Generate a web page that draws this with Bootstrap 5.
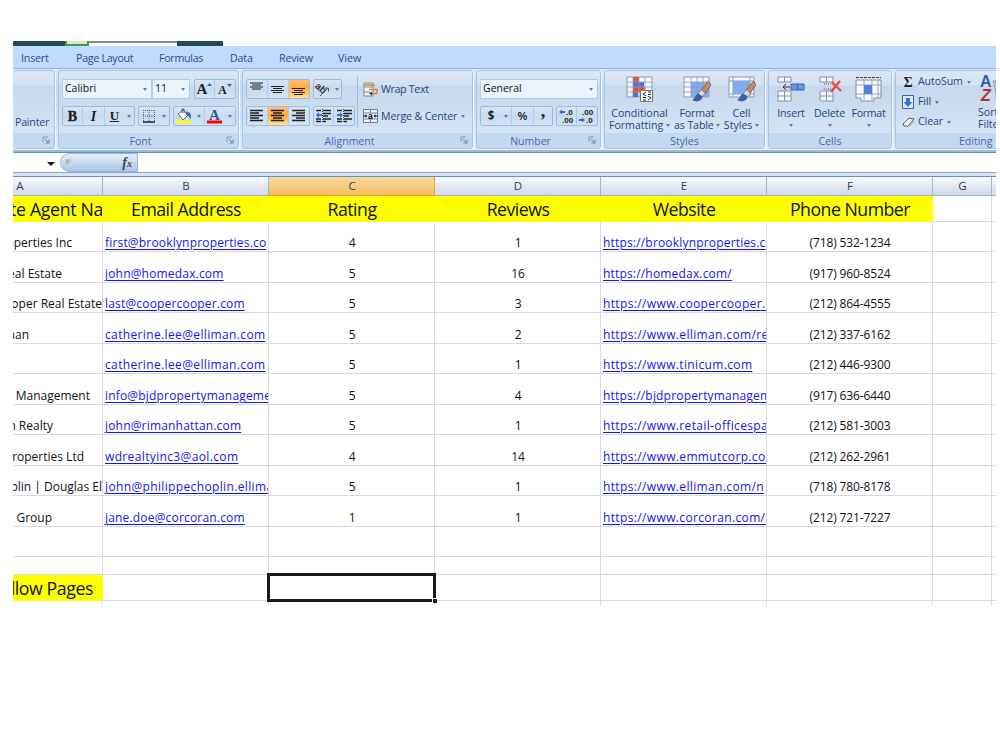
<!DOCTYPE html>
<html lang="en">
<head>
<meta charset="utf-8">
<meta name="viewport" content="width=device-width, initial-scale=1">
<title>Agents workbook</title>
<link href="https://cdn.jsdelivr.net/npm/bootstrap@5.3.0/dist/css/bootstrap.min.css" rel="stylesheet">
<style>
body{font-family:"Open Sans","Noto Sans",sans-serif;background:#fff;color:#111;overflow:hidden}
.book{width:983px;margin:41px 0 0 13px;overflow:hidden}
.titlestrip{height:5px;width:210px;background:#26494e}
.titlestrip .t1{width:24px;margin-left:52px;background:linear-gradient(#eedada 60%,#32a342 60%);border:solid #32a342;border-width:0 2px}
.titlestrip .t2{width:88px;background:#fff;border-top:2px solid #889}
.tabs{height:22px;background:#bfdbff;font-size:10.7px;line-height:24px;color:#15428b}
.tabs a{color:#24508f;text-decoration:none;white-space:nowrap}
.ribbon{height:82px;background:linear-gradient(#dbe8f8,#c8daf0 20%,#cfe0f3 60%,#d8f0fb);border-top:1px solid #8db2e3;padding-top:1px;width:1010px}
.grp{height:79px;border:1px solid #a9c4e2;border-radius:3px;background:linear-gradient(#dce7f5,#d3e1f1 18%,#c7d8ed 20%,#d9e8f7);box-shadow:1px 1px 0 #eef7ff;margin-right:3px;flex:none;overflow:hidden}
.glabel{height:15px;background:#c2d9f1;font-size:10.5px;line-height:16px;color:#3e6aaa;text-align:center;position:relative;flex:none}
.glabel svg{position:absolute;right:4px;top:3px}
.gbody{color:#24467f;font-size:10.6px;padding-top:8px;height:62px}
.r1{height:21px;margin-bottom:6px}
.r2{height:21px}
.seg{height:20px;border:1px solid #9dbbe1;border-radius:2px;background:linear-gradient(#d7e5f6,#c9dbf0 50%,#d3e3f5);margin-right:3px;color:#222}
.seg>span{display:flex;align-items:center;justify-content:center;border-right:1px solid #b5cbe7;height:18px}
.seg>span:last-child{border:0}
.seg>.on{background:linear-gradient(#fdc07a,#ffa844 45%,#ffe28b)}
.combo{height:20px;border:1px solid #b3cbe8;background:#eaf2fb;color:#111;padding:0 4px 0 2px;font-size:10.5px}
.dd{width:0;height:0;border:2.5px solid transparent;border-top:3px solid #5a7fb5;border-bottom:0;display:inline-block;flex:none}
.ser{font-family:"Liberation Serif",serif;font-weight:bold;color:#222}
.big{text-align:center;line-height:12px;white-space:nowrap;margin-top:-4px;font-size:10.6px}
.big svg{display:block;margin:1px auto 4px}
.big .dd{vertical-align:2px}
.vsep{width:1px;height:52px;background:#9dbbe1;margin-top:-3px}
.underline-bar{height:3px;background:#9dbad9;border-bottom:1px solid #6390c0}
.fbar{height:19px;background:#fff}
.fx{width:78px;margin-left:47px;border-radius:10px 0 0 10px;background:linear-gradient(#e8f0fa,#c4d6ef 60%,#a9c4e8);border:1px solid #9bb6d8}
.knob{width:7px;height:7px;border-radius:50%;background:radial-gradient(circle at 30% 30%,#a5afba,#e6ebf0)}
.fsep{height:5px;background:#d8e5f5;border-top:1px solid #8fa8c8;border-bottom:1px solid #6390c0}
.sheet{table-layout:fixed;width:1060px;border-collapse:separate;border-spacing:0}
.sheet th,.sheet td{padding:0;border-right:1px solid #d3dbea;border-bottom:1px solid #d3dbea;overflow:hidden;white-space:nowrap}
.sheet .heads th{height:19px;line-height:18px;font-weight:400;font-size:11.5px;text-align:center;color:#333f50;background:linear-gradient(#f7fafd,#dfe6f0 60%,#d3dae8);border-color:#9eb6ce;padding-left:1px}
.sheet .heads th.sel{background:linear-gradient(#f9d99f,#f1bf63);border-color:#f29536}
.sheet .titles td{height:26px;line-height:24px;font-size:17.7px;letter-spacing:-.5px;text-align:center;padding-left:1px}
.sheet td.y{background:#ff0;border-color:#ff0}
.sheet .titles td>div,.sheet .rec td>div{display:flex}
.rec td{font-size:12px;height:30px}
.rec:nth-child(even) td{height:31px}
.rec td>div{height:29px;line-height:17px;padding-top:12px;padding-left:1px;letter-spacing:-.12px;justify-content:center}
.rec:nth-child(even) td>div{height:30px;padding-top:13px}
.rec td>.nm{justify-content:flex-end;letter-spacing:0}
.rec td>.lk{justify-content:flex-start;padding-left:2px}
.lk a{color:#1414f0;text-decoration:underline;text-underline-offset:2px;text-decoration-thickness:1px;letter-spacing:.18px}
.lk a.wide{letter-spacing:.36px}
.active-cell{position:absolute;left:-2px;top:-2px;width:169px;height:29px;border:3px solid #1a1a1a}
.active-cell:after{content:"";position:absolute;right:-4px;bottom:-4px;width:5px;height:5px;background:#1a1a1a;border:solid #fff;border-width:1px 0 0 1px}
</style>
</head>
<body>
<svg width="0" height="0" class="position-absolute"><defs>
<symbol id="launch" viewBox="0 0 8 8"><path d="M1 6V1H6" fill="none" stroke="#7896bd"/><path d="M3 3l3 3M7 3.500V7H3.500" fill="none" stroke="#5d7fae"/></symbol>
<symbol id="brush" viewBox="0 0 20 22"><path d="M17.500 0 9 10l4 4L20 4z" fill="#c48d58" stroke="#6f5240" stroke-width=".8"/><path d="m10 9-4 5 4 3 4-4z" fill="#d8dde5" stroke="#666" stroke-width=".7"/><path d="M6.500 13c-4 2-3 5-6.500 7 5 3 11 1 11-4z" fill="#3763ad"/></symbol>
</defs></svg>
<main class="book">
<div class="titlestrip d-flex"><div class="t1"></div><div class="t2"></div></div>
<nav class="tabs d-flex">
<a href="#" style="margin-left:8px;width:55px;letter-spacing:-.2px">Insert</a><a href="#" style="width:83px;letter-spacing:-.3px">Page Layout</a><a href="#" style="width:71px;letter-spacing:-.3px">Formulas</a><a href="#" style="width:49px;letter-spacing:-.2px">Data</a><a href="#" style="width:59px;letter-spacing:-.2px">Review</a><a href="#">View</a>
</nav>
<div class="ribbon d-flex">
 <section class="grp d-flex flex-column" style="width:42px;border-left:0"><div class="gbody" style="padding:44px 0 0 2px;letter-spacing:-.2px">Painter</div><div class="glabel"><svg width="8" height="8"><use href="#launch"/></svg></div></section>

 <section class="grp d-flex flex-column" style="width:181px"><div class="gbody" style="padding-left:3px">
  <div class="r1 d-flex"><div class="combo d-flex align-items-center justify-content-between" style="width:90px">Calibri<i class="dd"></i></div><div class="combo d-flex align-items-center justify-content-between me-1" style="width:38px">11<i class="dd"></i></div>
   <div class="seg d-flex me-0" style="width:42px"><span class="ser" style="width:20px;font-size:15px">A<svg width="5" height="12"><path d="M0 3 2.500 0 5 3z" fill="#3b65a5"/></svg></span><span class="ser" style="width:20px;font-size:11.5px;padding-top:3px">A<svg width="5" height="14"><path d="M0 0 2.500 3 5 0z" fill="#3b65a5"/></svg></span></div></div>
  <div class="r2 d-flex"><div class="seg d-flex" style="width:73px"><span class="ser" style="width:20px;font-size:14px;-webkit-text-stroke:.4px #222">B</span><span class="ser fst-italic" style="width:22px;font-size:14px">I</span><span class="ser" style="width:19px;font-size:13px;border:0"><u>U</u></span><span style="width:10px"><i class="dd"></i></span></div>
   <div class="seg d-flex" style="width:32px"><span style="width:20px;border:0"><svg width="12" height="13"><path d="M.5 0V12M6 0V12M11.500 0V12M0 .5H12M0 6H12" stroke="#667" stroke-dasharray="1 1"/><path d="M0 12H12" stroke="#222" stroke-width="1.500"/></svg></span><span style="width:10px"><i class="dd"></i></span></div>
   <div class="seg d-flex me-0" style="width:63px"><span style="width:20px;border:0"><svg width="16" height="16"><path d="m2 6 5-4 5 5-5 5z" fill="#fff" stroke="#526787"/><path d="M6 5V1h2v4" fill="none" stroke="#555"/><path d="M10 3.500c5 0 6 4 4.500 8-1-2-2-4-4.500-5z" fill="#3f6fc0"/><path d="M0 12.500h15v3H0z" fill="#ff0"/></svg></span><span style="width:11px"><i class="dd"></i></span><span style="width:19px;border:0"><svg width="15" height="16"><text x="2" y="11.500" font-family="Liberation Serif" font-weight="bold" font-size="15" fill="#31599b">A</text><path d="M0 12.500h15v3H0z" fill="#f00"/></svg></span><span style="width:11px"><i class="dd"></i></span></div></div>
 </div><div class="glabel" style="padding-right:16px">Font<svg width="8" height="8"><use href="#launch"/></svg></div></section>

 <section class="grp d-flex flex-column" style="width:231px"><div class="gbody d-flex" style="padding-left:3px">
  <div style="width:111px"><div class="r1 d-flex"><div class="seg d-flex" style="width:64px"><span style="width:21px"><svg width="14" height="14"><path d="M0 1h13M2 3h9M0 5h13M2 7h9" stroke="#222" stroke-width="1.200"/></svg></span><span style="width:21px"><svg width="14" height="14"><path d="M0 4.500h13M2 6.500h9M0 8.500h13M2 10.500h9" stroke="#222" stroke-width="1.200"/></svg></span><span class="on" style="width:20px"><svg width="14" height="14"><path d="M0 6.500h13M2 8.500h9M0 10.500h13M2 12.500h9" stroke="#222" stroke-width="1.200"/></svg></span></div>
   <div class="seg d-flex" style="width:29px"><span style="width:18px;border:0"><svg width="16" height="16"><text x="-1" y="11" transform="rotate(40 6 9)" font-family="Liberation Sans" font-size="10" font-weight="bold" fill="#333">ab</text><path d="m5 15 8-8m-3 0h3.500v3.500" stroke="#555" fill="none"/></svg></span><span style="width:9px"><i class="dd"></i></span></div></div>
   <div class="r2 d-flex"><div class="seg d-flex" style="width:64px"><span style="width:21px"><svg width="14" height="14"><path d="M0 1.500h13M0 4h9M0 6.500h13M0 9h9M0 11.500h13" stroke="#222" stroke-width="1.300"/></svg></span><span class="on" style="width:21px"><svg width="14" height="14"><path d="M0 1.500h13M2 4h9M0 6.500h13M2 9h9M0 11.500h13" stroke="#222" stroke-width="1.300"/></svg></span><span style="width:20px"><svg width="14" height="14"><path d="M0 1.500h13M4 4h9M0 6.500h13M4 9h9M0 11.500h13" stroke="#222" stroke-width="1.300"/></svg></span></div>
   <div class="seg d-flex" style="width:42px"><span style="width:20px"><svg width="15" height="14"><path d="M0 1.500h5M7 1.500h8M7 4.500h8M7 7h5M0 10h5M7 10h8M0 12.500h5M7 12.500h3" stroke="#222" stroke-width="1.500"/><path d="M6.500 0v14" stroke="#444" stroke-dasharray="1 1"/><path d="M0 6l3-3v2h3v2H3v2z" fill="#396fc5"/></svg></span><span style="width:20px"><svg width="15" height="14"><path d="M0 1.500h5M7 1.500h8M7 4.500h8M7 7h5M0 10h5M7 10h8M0 12.500h5M7 12.500h3" stroke="#222" stroke-width="1.500"/><path d="M6.500 0v14" stroke="#444" stroke-dasharray="1 1"/><path d="M6 6 3 3v2H0v2h3v2z" fill="#396fc5"/></svg></span></div></div></div>
  <div class="vsep"></div>
  <div style="padding-left:5px"><div class="r1 d-flex align-items-center gap-1 text-nowrap"><svg width="15" height="16"><path d="M1 1h9v13H1z" fill="#f4f7fb" stroke="#7c8797"/><path d="M1 5h9M1 10h6" stroke="#7c8797"/><path d="M1 3h11M6 7.500h8v4H8" stroke="#c98238" stroke-width="1.300" fill="none"/><path d="m9 9.500-3 2 3 2z" fill="#333"/></svg><span style="margin-left:-1px;letter-spacing:-.3px">Wrap Text</span></div>
   <div class="r2 d-flex align-items-center gap-1 text-nowrap"><svg width="15" height="15"><path d="M.5.5h14v13H.5zM.5 4h14M.5 10h14M7.500.5V4M7.500 10v3.500" fill="#eef3fa" stroke="#6e7f99"/><path d="M0 7h4M11 7h4" stroke="#222"/><path d="M2.500 5l2 2-2 2zM12.500 5l-2 2 2 2z" fill="#222"/><text x="5" y="9.500" font-size="8.500" font-weight="bold" font-family="Liberation Sans">a</text></svg><span style="margin-left:-1px;letter-spacing:-.12px">Merge &amp; Center</span><i class="dd"></i></div></div>
 </div><div class="glabel" style="padding-right:16px">Alignment<svg width="8" height="8"><use href="#launch"/></svg></div></section>

 <section class="grp d-flex flex-column" style="width:125px"><div class="gbody" style="padding-left:3px">
  <div class="r1"><div class="combo d-flex align-items-center justify-content-between" style="width:118px">General<i class="dd"></i></div></div>
  <div class="r2 d-flex"><div class="seg d-flex" style="width:73px"><span class="fw-bold" style="width:20px;font-size:11.5px;border:0">$</span><span style="width:11px"><i class="dd"></i></span><span style="width:22px;font-size:11.5px;font-weight:600">%</span><span class="ser" style="width:18px;font-size:18px;padding-bottom:9px">,</span></div>
  <div class="seg d-flex me-0" style="width:42px"><span style="width:20px"><svg width="16" height="16" font-family="Liberation Sans" font-size="8" font-weight="bold" fill="#222"><text x="7" y="7">.0</text><text x="3" y="15">.00</text><path d="M0 4l3-2.500V3h3v2H3v1.500z" fill="#346cc4"/></svg></span><span style="width:20px"><svg width="16" height="16" font-family="Liberation Sans" font-size="8" font-weight="bold" fill="#222"><text x="3" y="7">.00</text><text x="7" y="15">.0</text><path d="m6 12-3-2.500V11H0v2h3v1.500z" fill="#346cc4"/></svg></span></div></div>
 </div><div class="glabel" style="padding-right:16px">Number<svg width="8" height="8"><use href="#launch"/></svg></div></section>

 <section class="grp d-flex flex-column" style="width:161px"><div class="gbody d-flex">
  <div class="big" style="width:69px"><svg width="28" height="27"><path d="M1 1h25v20H1z" fill="#f5f8fd" stroke="#8b9bb5"/><path d="M7 1h6v5H7zM7 11h12v5H7z" fill="#ef4d36"/><path d="M7 6h11v5H7zM7 16h5v5H7z" fill="#4574d6"/><path d="M7 1v20M13 1v20M19 1v20M1 6h25M1 11h25M1 16h25" stroke="#8b9bb5" stroke-width=".8"/><path d="M14.500 14.500h12v11h-12z" fill="#fff" stroke="#777"/><path d="m20 16-3 2 3 2M17 21.500h3M17 24h3M22 16h3M22 18.500h3M22 20l3 2-3 2" fill="none" stroke="#222"/></svg>Conditional<br>Formatting <i class="dd"></i></div>
  <div class="big" style="width:46px;letter-spacing:-.1px"><svg width="28" height="27"><path d="M1 1h25v20H1z" fill="#f5f8fd" stroke="#8b9bb5"/><path d="M8 6h18v15H8z" fill="#82abef"/><path d="M8 1v20M14 1v20M20 1v20M1 6h25M1 11h25M1 16h25" stroke="#8b9bb5" stroke-width=".8"/><use href="#brush" x="9" y="5" width="19" height="21"/></svg>Format<br>as Table <i class="dd"></i></div>
  <div class="big" style="width:43px"><svg width="28" height="27"><path d="M1 1h25v20H1z" fill="#f5f8fd" stroke="#8b9bb5"/><path d="M5 1v20M22 1v20M1 5h25M1 18h25" stroke="#8b9bb5"/><path d="M5 5h17v13H5z" fill="#82abef"/><use href="#brush" x="9" y="5" width="19" height="21"/></svg>Cell<br>Styles <i class="dd"></i></div>
 </div><div class="glabel">Styles</div></section>

 <section class="grp d-flex flex-column" style="width:124px"><div class="gbody d-flex" style="padding-left:3px">
  <div class="big" style="width:38px;letter-spacing:-.2px"><svg width="28" height="27"><path d="M1 1h13v5H1zM7.500 1v5M1 15h13v10H1zM1 20h13M7.500 15v10" fill="#f7f9fc" stroke="#8490a5"/><path d="M14 8h13v6H14zM20.500 8v6" fill="#6a96e4" stroke="#3d62a6"/><path d="M6 11h7M9 8l-3 3 3 3" fill="none" stroke="#334"/></svg>Insert<br><i class="dd"></i></div>
  <div class="big" style="width:39px;letter-spacing:-.2px"><svg width="28" height="27"><path d="M4 1h13v5H4zM10.500 1v5M4 15h13v10H4zM4 20h13M10.500 15v10" fill="#f7f9fc" stroke="#8490a5"/><path d="M8 8h10v5H8" fill="none" stroke="#557" stroke-dasharray="1 1"/><path d="m16 6 9 9M24 5l-9 11" stroke="#ec4c36" stroke-width="2.300"/></svg>Delete<br><i class="dd"></i></div>
  <div class="big" style="width:39px;letter-spacing:-.3px"><svg width="28" height="27"><path d="M1 1.500h25" stroke="#444" stroke-dasharray="3 1"/><path d="M1 4h25v18h-7v3H6v-3H1z" fill="#f7f9fc" stroke="#8490a5"/><path d="M9 4v20M17 4v20M1 9h25M1 18h25M23 4v18" stroke="#8490a5" stroke-width=".8"/><path d="M9 9h8v9H9z" fill="#4d82dc"/></svg>Format<br><i class="dd"></i></div>
 </div><div class="glabel">Cells</div></section>

 <section class="grp d-flex flex-column" style="width:160px"><div class="gbody d-flex" style="padding:1px 0 0 6px">
  <div style="width:73px;letter-spacing:-.1px"><div class="d-flex align-items-center" style="height:20px;gap:4px"><span class="ser text-center" style="width:12px;font-size:14px">Σ</span>AutoSum<i class="dd"></i></div>
  <div class="d-flex align-items-center" style="height:20px;gap:4px"><svg width="12" height="14"><path d="M.5.5h11v13H.5z" fill="#dceaff" stroke="#3f65a4"/><path d="M4 3h4v4h2.500L6 12 1.500 7H4z" fill="#3972d7"/></svg>Fill<i class="dd"></i></div>
  <div class="d-flex align-items-center" style="height:20px;gap:4px"><svg width="12" height="12"><path d="m1 8 6-6 5 1-6 7H2z" fill="#fff" stroke="#555"/><path d="m6 10 6-6v2l-5 5z" fill="#a7b3c4"/></svg>Clear<i class="dd"></i></div></div>
  <div style="padding:3px 0 0 5px;line-height:12px"><svg width="30" height="27" class="d-block" style="margin-bottom:4px" font-family="Liberation Sans" font-weight="bold" font-size="16"><path d="M13 6h15L20 16v8l-4-2v-6z" fill="#ccc" stroke="#888"/><text x="0" y="12" fill="#3660a6">A</text><text x="1" y="26" fill="#a83834" font-style="italic">Z</text></svg><div style="margin-left:-2px">Sort &amp;<br>Filter</div></div>
 </div><div class="glabel text-start" style="padding-left:63px">Editing</div></section>
</div>
<div class="underline-bar"></div>
<div class="fbar d-flex"><div class="fx d-flex align-items-center justify-content-between position-relative" style="padding:0 5px 0 4px"><i class="dd position-absolute" style="left:-14px;top:8px;border-width:4px 4px 0;border-top-color:#111"></i><span class="knob"></span><span class="ser fst-italic" style="font-size:14px;color:#444">f<small style="font-size:10px">x</small></span></div></div>
<div class="fsep"></div>
<table class="sheet">
<colgroup><col style="width:90px"><col style="width:166px"><col style="width:166px"><col style="width:166px"><col style="width:166px"><col style="width:166px"><col style="width:59px"><col></colgroup>
<tbody>
<tr class="heads"><th><div style="margin-left:-76px">A</div></th><th>B</th><th class="sel">C</th><th>D</th><th>E</th><th>F</th><th>G</th><th></th></tr>
<tr class="titles"><td class="y"><div style="margin-left:-4px;letter-spacing:-.3px">te Agent Na</div></td><td class="y">Email Address</td><td class="y">Rating</td><td class="y">Reviews</td><td class="y">Website</td><td class="y">Phone Number</td><td></td><td></td></tr>
<tr class="rec"><td><div class="nm" style="padding-right:30px">operties Inc</div></td><td><div class="lk"><a href="#">first@brooklynproperties.co</a></div></td><td><div>4</div></td><td><div>1</div></td><td><div class="lk"><a href="#">https://brooklynproperties.c</a></div></td><td><div>(718) 532-1234</div></td><td></td><td></td></tr>
<tr class="rec"><td><div class="nm" style="padding-right:40px">eal Estate</div></td><td><div class="lk"><a href="#">john@homedax.com</a></div></td><td><div>5</div></td><td><div>16</div></td><td><div class="lk"><a href="#">https://homedax.com/</a></div></td><td><div>(917) 960-8524</div></td><td></td><td></td></tr>
<tr class="rec"><td><div class="nm">ooper Real Estate</div></td><td><div class="lk"><a href="#">last@coopercooper.com</a></div></td><td><div>5</div></td><td><div>3</div></td><td><div class="lk"><a class="wide" href="#">https://www.coopercooper.c</a></div></td><td><div>(212) 864-4555</div></td><td></td><td></td></tr>
<tr class="rec"><td><div class="nm" style="padding-right:73px">man</div></td><td><div class="lk"><a class="wide" href="#">catherine.lee@elliman.com</a></div></td><td><div>5</div></td><td><div>2</div></td><td><div class="lk"><a class="wide" href="#">https://www.elliman.com/re</a></div></td><td><div>(212) 337-6162</div></td><td></td><td></td></tr>
<tr class="rec"><td></td><td><div class="lk"><a class="wide" href="#">catherine.lee@elliman.com</a></div></td><td><div>5</div></td><td><div>1</div></td><td><div class="lk"><a class="wide" href="#">https://www.tinicum.com</a></div></td><td><div>(212) 446-9300</div></td><td></td><td></td></tr>
<tr class="rec"><td><div class="nm" style="padding-right:12px">Management</div></td><td><div class="lk"><a href="#">info@bjdpropertymanageme</a></div></td><td><div>5</div></td><td><div>4</div></td><td><div class="lk"><a href="#">https://bjdpropertymanagem</a></div></td><td><div>(917) 636-6440</div></td><td></td><td></td></tr>
<tr class="rec"><td><div class="nm" style="padding-right:49px">n Realty</div></td><td><div class="lk"><a href="#">john@rimanhattan.com</a></div></td><td><div>5</div></td><td><div>1</div></td><td><div class="lk"><a class="wide" href="#">https://www.retail-officespa</a></div></td><td><div>(212) 581-3003</div></td><td></td><td></td></tr>
<tr class="rec"><td><div class="nm" style="padding-right:18px">roperties Ltd</div></td><td><div class="lk"><a class="wide" href="#">wdrealtyinc3@aol.com</a></div></td><td><div>4</div></td><td><div>14</div></td><td><div class="lk"><a class="wide" href="#">https://www.emmutcorp.com</a></div></td><td><div>(212) 262-2961</div></td><td></td><td></td></tr>
<tr class="rec"><td><div class="nm">plin | Douglas El</div></td><td><div class="lk"><a class="wide" href="#">john@philippechoplin.ellima</a></div></td><td><div>5</div></td><td><div>1</div></td><td><div class="lk"><a class="wide" href="#">https://www.elliman.com/n</a></div></td><td><div>(718) 780-8178</div></td><td></td><td></td></tr>
<tr class="rec"><td><div class="nm" style="padding-right:50px">Group</div></td><td><div class="lk"><a href="#">jane.doe@corcoran.com</a></div></td><td><div>1</div></td><td><div>1</div></td><td><div class="lk"><a class="wide" href="#">https://www.corcoran.com/n</a></div></td><td><div>(212) 721-7227</div></td><td></td><td></td></tr>
<tr style="height:30px"><td></td><td></td><td></td><td></td><td></td><td></td><td></td><td></td></tr>
<tr style="height:18px"><td></td><td></td><td></td><td></td><td></td><td></td><td></td><td></td></tr>
<tr class="titles"><td class="y"><div class="justify-content-end" style="padding-right:9px;letter-spacing:-.4px">llow Pages</div></td><td></td><td class="position-relative overflow-visible"><div class="active-cell"></div></td><td></td><td></td><td></td><td></td><td></td></tr>
<tr style="height:4px"><td class="border-bottom-0"></td><td class="border-bottom-0"></td><td class="border-bottom-0"></td><td class="border-bottom-0"></td><td class="border-bottom-0"></td><td class="border-bottom-0"></td><td class="border-bottom-0"></td><td class="border-bottom-0"></td></tr>
</tbody></table>
</main>
<script src="https://cdn.jsdelivr.net/npm/bootstrap@5.3.0/dist/js/bootstrap.bundle.min.js"></script>
</body>
</html>
